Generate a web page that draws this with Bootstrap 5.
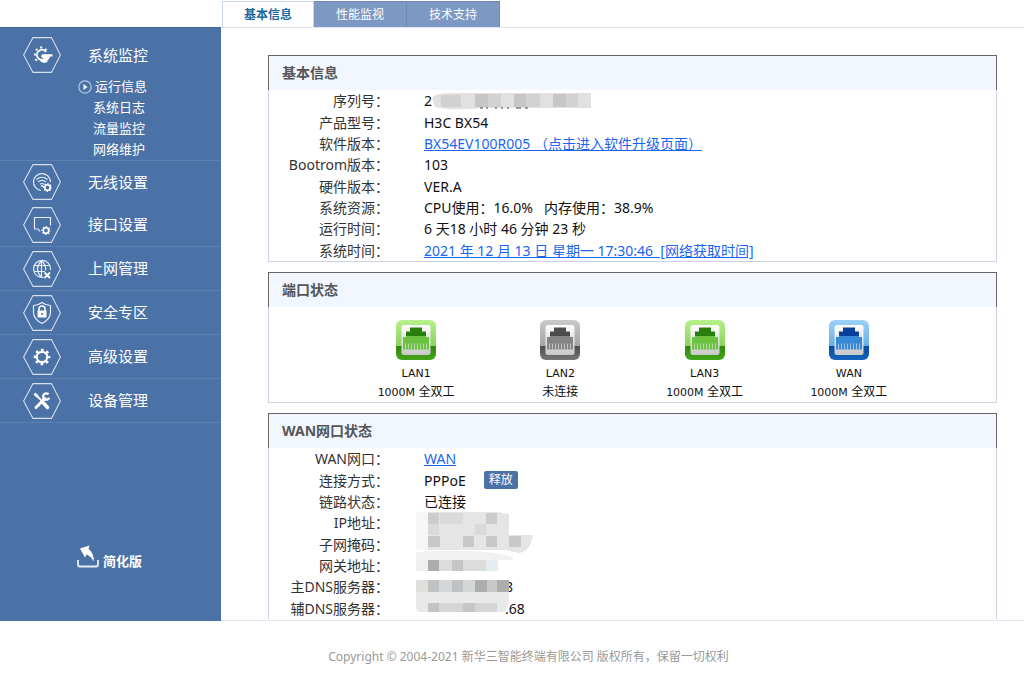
<!DOCTYPE html>
<html lang="zh-CN">
<head>
<meta charset="utf-8">
<meta name="viewport" content="width=device-width, initial-scale=1">
<title>基本信息</title>
<link href="https://cdn.jsdelivr.net/npm/bootstrap@5.3.0/dist/css/bootstrap.min.css" rel="stylesheet">
<style>
  body { font-family: "Noto Sans", "Noto Sans CJK SC", sans-serif; font-size: 14px; line-height: 21px; color: #111; background: #fff; }
  .top-tabs { margin-left: 222px; padding-top: 1px; height: 27px; }
  .top-tabs .nav-link { width: 93px; height: 26px; padding: 0; font-size: 12px; line-height: 25px; text-align: center; color: #fff; background: #7d99c3; border: 1px solid #7189ae; border-width: 1px 1px 0 0; border-radius: 0; }
  .top-tabs .nav-link.active { width: 92px; color: #1a689c; font-weight: 700; background: #fff; border: 1px solid #cbd7e8; border-bottom: 0; }
  .side { width: 221px; background: #4a72a6; border-top: 1px solid #3d64a0; flex: none; }
  .side a { color: #fff; text-decoration: none; }
  .side-item { display: flex; align-items: center; height: 44px; padding-left: 23px; font-size: 15px; border-bottom: 1px solid #5b80b2; }
  .side-item.short { height: 42px; border-bottom: 0; }
  .side-item svg { margin-right: 27px; }
  .side-group { padding-top: 6px; border-bottom: 1px solid #5b80b2; }
  .sub-item { display: flex; align-items: center; height: 21px; padding-left: 93px; font-size: 13px; }
  .sub-item.current { padding-left: 78px; gap: 3px; }
  .simple-link { padding: 0 0 49px 77px; font-size: 13px; font-weight: 700; gap: 4px; }
  .simple-link svg { margin-bottom: 3px; }
  .hex { fill: none; stroke: #d5e0ee; stroke-width: 1.1; }
  .ln { fill: none; stroke: #e4ecf5; stroke-width: 1.2; }
  .main-area { border-top: 1px solid #dfe4ef; border-bottom: 1px solid #e3e7f1; padding: 27px 27px 0 47px; min-height: 594px; }
  .panel { border: 1px solid #cbd2e3; border-top: 0; margin-bottom: 10px; }
  .panel.open-end { border-bottom: 0; margin-bottom: 0; }
  .panel h2 { margin: 0 -1px; padding: 1px 0 0 13px; height: 35px; font-size: 14px; line-height: 32px; font-weight: 700; color: #555; background: #f2f6fe; border: 1px solid #666; border-bottom: 0; }
  .facts { display: grid; grid-template-columns: 120px 1fr; grid-auto-rows: 1fr; column-gap: 35px; min-height: 171px; margin: 0; align-items: center; }
  .facts dt { font-weight: 400; text-align: right; color: #333; white-space: nowrap; }
  .facts dd { margin: 0; display: flex; align-items: center; white-space: pre; height: 21px; }
  .facts a { color: #1a66f0; }
  .release { padding: 0 4px; height: 18px; line-height: 16px; font-size: 12px; color: #fff; background: #4a72a6; border-radius: 2px; margin-left: 18px; }
  .ports { padding: 12px 75px 0; display: grid; grid-template-columns: repeat(4, 1fr); font-family: "DejaVu Sans", "Noto Sans CJK SC", sans-serif; font-size: 11px; line-height: 19px; text-align: center; }
  .ports svg { display: block; margin: 0 auto 3px; }
  .ports span { font-size: 12px; }
  .masked { position: relative; }
  .masked svg { position: absolute; left: -8px; top: 0; }
  .tail { padding-left: 81px; }
  footer { padding-top: 25px; padding-left: 33px; font-size: 12px; color: #999; text-align: center; }
</style>
</head>
<body>
<svg width="0" height="0" class="position-absolute" aria-hidden="true">
  <defs>
    <path id="hexagon" class="hex" d="M.6 18 10 .6h18.500L37.400 18 28.500 35.400H10z"/>
    <g id="gear" fill="none" stroke="#fff"><circle r="5.200" stroke-width="2.200"/><circle r="7.100" stroke-width="2.400" stroke-dasharray="2.600 2.976" stroke-dashoffset="1.300"/></g>
    <g id="cog" fill="none" stroke="#fff"><circle r="2.700" stroke-width="1.600"/><circle r="3.900" stroke-width="1.200" stroke-dasharray="1.500 1.563" stroke-dashoffset=".7"/></g>
    <linearGradient id="green" x2="0" y2="1"><stop offset="0" stop-color="#b6f08c"/><stop offset=".64" stop-color="#8bd45e"/><stop offset=".66" stop-color="#2f8a0b"/><stop offset="1" stop-color="#43a519"/></linearGradient>
    <linearGradient id="grey" x2="0" y2="1"><stop offset="0" stop-color="#c9c9c9"/><stop offset=".64" stop-color="#a5a5a5"/><stop offset=".66" stop-color="#505050"/><stop offset="1" stop-color="#777"/></linearGradient>
    <linearGradient id="blue" x2="0" y2="1"><stop offset="0" stop-color="#9cd2fa"/><stop offset=".64" stop-color="#66aee9"/><stop offset=".66" stop-color="#064c9e"/><stop offset="1" stop-color="#1465bb"/></linearGradient>
    <linearGradient id="plate" x2="0" y2="1"><stop offset="0" stop-color="#fff"/><stop offset="1" stop-color="#c8c8c8"/></linearGradient>
    <g id="socket">
      <rect x="5.500" y="6" width="29" height="30" rx="2.500" fill="url(#plate)"/>
      <path d="M14 8.500h12v4h4v5H10v-5h4z" fill="var(--deep)"/>
      <path d="M10 17h20v1h3v12.500H7V18h3z" fill="var(--tone)"/>
      <path d="M9.500 24.500v6m3-6v6m3-6v6m3-6v6m3-6v6m3-6v6m3-6v6m3-6v6" stroke="#ddd" stroke-width=".9" opacity=".75"/>
    </g>
  </defs>
</svg>

<nav class="top-tabs nav">
  <a class="nav-link active" href="#">基本信息</a>
  <a class="nav-link" href="#">性能监视</a>
  <a class="nav-link" href="#">技术支持</a>
</nav>

<div class="d-flex">
  <nav class="side d-flex flex-column">
    <div class="side-group">
      <a class="side-item short" href="#"><svg width="38" height="36"><use href="#hexagon"/><g fill="none" stroke="#fff"><path d="M21.500 22.200A5 5 0 1 1 23 15" stroke-width="1.800"/><path d="M12.500 23.500l1.300-1.300M11 17.500h2M13 12l1.300 1.300M18.200 9.500v2M23.500 12l-1.300 1.300" stroke-width="2.200"/></g><path d="M19 17.200h10.500v2.300H27v1.200h-.8V22h-.8v1.300h-1V25l-3.400 1-3.500-1.500v-3l3.500.5-3-2.500z" fill="#fff"/></svg>系统监控</a>
      <a class="sub-item current" href="#"><svg width="14" height="14" class="ln"><circle cx="7" cy="7" r="6.200" stroke="#b8cae1"/><path d="M5.500 4v6L9.500 7z" fill="#fff" stroke="none"/></svg>运行信息</a>
      <a class="sub-item" href="#">系统日志</a>
      <a class="sub-item" href="#">流量监控</a>
      <a class="sub-item" href="#">网络维护</a>
    </div>
    <a class="side-item short" href="#"><svg width="38" height="36"><use href="#hexagon"/><g class="ln"><path d="M18 26.500A8.500 8.500 0 1 1 27.500 18"/><path d="M13.500 15.500q5.500-4.500 11 0M15 18q4-3.200 8 0M17 20.300q2-1.600 4 0"/></g><circle cx="19" cy="22" r="1" fill="#fff"/><use href="#cog" x="24.500" y="23.500"/></svg>无线设置</a>
    <a class="side-item" href="#"><svg width="38" height="36"><use href="#hexagon"/><path class="ln" d="M27.500 18.500v-8h-16v11.500h3.500l2 2.500"/><use href="#cog" x="23" y="23.500"/></svg>接口设置</a>
    <a class="side-item" href="#"><svg width="38" height="36"><use href="#hexagon"/><g class="ln"><path d="M20.500 26.300A8.500 8.500 0 1 1 27.500 19M11.500 14.500h15M11 20.500h11M18.500 9.500v17M18.500 9.500q-8 8.500 0 17M18.500 9.500q5 4.500 4 10"/></g><path d="M21.500 21.500l5.500 5.500m0-5.500L21.500 27" stroke="#fff" stroke-width="1.800"/></svg>上网管理</a>
    <a class="side-item" href="#"><svg width="38" height="36"><use href="#hexagon"/><path class="ln" d="M19 7.500q4 3 8.500 3v7q0 6.500-8.500 11-8.500-4.500-8.500-11v-7q4.500 0 8.500-3z"/><path d="M16 16v-2q0-3 3-3t3 3v2" fill="none" stroke="#fff" stroke-width="1.500"/><path d="M14.500 15.500h9v7h-9z" fill="#fff"/><circle cx="19" cy="19" r="1" fill="#4a72a6"/></svg>安全专区</a>
    <a class="side-item" href="#"><svg width="38" height="36"><use href="#hexagon"/><use href="#gear" x="19" y="18"/></svg>高级设置</a>
    <a class="side-item" href="#"><svg width="38" height="36"><use href="#hexagon"/><g fill="none" stroke="#fff"><path d="M13 24.500l9-9" stroke-width="3" stroke-linecap="round"/><path d="M25.600 11.300a3.200 3.200 0 1 0 .6 3.500" stroke-width="2.300"/><path d="M12 11l8 8" stroke-width="1.800"/><path d="M20.500 20l4 4.500" stroke-width="3.600" stroke-linecap="round"/><path d="M11.500 10.500l3 3" stroke-width="2.600"/></g></svg>设备管理</a>
    <a class="simple-link d-flex align-items-end mt-auto" href="#"><svg width="22" height="24"><path d="M1 15v4.500q0 2 2 2h16q2 0 2-2V15" fill="none" stroke="#e6edf6" stroke-width="1.800"/><path d="M3 3.500L12.500.5l-1 3.300q6 5 5 12.700-2-5-7-7L8 12.500z" fill="#fff"/></svg>简化版</a>
  </nav>

  <main class="main-area flex-grow-1">
    <section class="panel">
      <h2>基本信息</h2>
      <dl class="facts">
        <dt>序列号：</dt><dd>2<svg width="160" height="18"><path d="M0 6q3-5 18-5h141v15H50Q20 19 3 15z" fill="#e1e1e1"/><path d="M9 3h20v12H9z" fill="#d2d0d0"/><path d="M43 2h13v13H43zM82 2h12v13H82zM121 2h13v13h-13z" fill="#c7c5c6"/><path d="M56 2h13v13H56zM94 2h14v13H94zM134 2h12v13h-12z" fill="#d3d2d2"/><path d="M48 16h3m3 0h2m7 0h2m4 0h2m4 0h2m7 0h5m4 0h3" stroke="#444"/></svg></dd>
        <dt>产品型号：</dt><dd>H3C BX54</dd>
        <dt>软件版本：</dt><dd><a href="#">BX54EV100R005 （点击进入软件升级页面）</a></dd>
        <dt>Bootrom版本：</dt><dd>103</dd>
        <dt>硬件版本：</dt><dd>VER.A</dd>
        <dt>系统资源：</dt><dd>CPU使用：16.0%   内存使用：38.9%</dd>
        <dt>运行时间：</dt><dd>6 天18 小时 46 分钟 23 秒</dd>
        <dt>系统时间：</dt><dd><a href="#">2021 年 12 月 13 日 星期一 17:30:46  [网络获取时间]</a></dd>
      </dl>
    </section>

    <section class="panel">
      <h2>端口状态</h2>
      <div class="ports">
        <div><svg width="40" height="42" style="--deep:#28800a;--tone:#6cc241"><rect y="1" width="40" height="40" rx="6" fill="url(#green)"/><use href="#socket"/></svg>LAN1<br>1000M <span>全双工</span></div>
        <div><svg width="40" height="42" style="--deep:#4c4c4c;--tone:#858585"><rect y="1" width="40" height="40" rx="6" fill="url(#grey)"/><use href="#socket"/></svg>LAN2<br><span>未连接</span></div>
        <div><svg width="40" height="42" style="--deep:#28800a;--tone:#6cc241"><rect y="1" width="40" height="40" rx="6" fill="url(#green)"/><use href="#socket"/></svg>LAN3<br>1000M <span>全双工</span></div>
        <div><svg width="40" height="42" style="--deep:#07409a;--tone:#3789d8"><rect y="1" width="40" height="40" rx="6" fill="url(#blue)"/><use href="#socket"/></svg>WAN<br>1000M <span>全双工</span></div>
      </div>
    </section>

    <section class="panel open-end">
      <h2>WAN网口状态</h2>
      <dl class="facts">
        <dt>WAN网口：</dt><dd><a href="#">WAN</a></dd>
        <dt>连接方式：</dt><dd>PPPoE<button type="button" class="btn release">释放</button></dd>
        <dt>链路状态：</dt><dd>已连接</dd>
        <dt>IP地址：</dt><dd class="masked"><svg width="120" height="62"><path d="M0 0h82l11 2v21h24q-3 17-14 18L90 38H0z" fill="#e5e5e5"/><path d="M0 0h12v38H0z" fill="#f6f6f5"/><path d="M12 1h11v11H12zM70 1h11v11H70z" fill="#ccc"/><path d="M24 1h23v11H24zM59 12h11v11H59zM12 12h11v11H12z" fill="#dadada"/><path d="M12 24h12v11H12zM47 24h11v11H47zM93 24h12v11H93zM70 24h11v11H70z" fill="#c6c8ca"/><path d="M0 40q65-4 97 5v3H0z" fill="#f1f1f1"/><path d="M0 48h82v11H0z" fill="#dcdcdc"/><path d="M0 48h12v11H0z" fill="#f0efed"/><path d="M12 48h11v11H12z" fill="#acacac"/><path d="M36 48h11v11H36z" fill="#c4c5c7"/><path d="M70 48h12v11H70z" fill="#e5edf1"/></svg></dd>
        <dt>子网掩码：</dt><dd></dd>
        <dt>网关地址：</dt><dd></dd>
        <dt>主DNS服务器：</dt><dd class="masked"><span class="tail">8</span><svg width="96" height="40"><path d="M0 4h93v22l-4 10H4q-4 0-4-5z" fill="#e9e9e9"/><path d="M0 4h12v12H0z" fill="#e1dfdb"/><path d="M12 4h11v12H12zM36 4h11v12H36z" fill="#bfc1c3"/><path d="M23 4h13v12H23zM47 4h12v12H47z" fill="#d3d7d8"/><path d="M59 4h12v12H59zM81 4h12v12H81z" fill="#aeacad"/><path d="M71 4h10v12H71z" fill="#c8c8c8"/><path d="M12 27h11v9H12z" fill="#c6c3c4"/><path d="M23 27h24v9H23zM59 27h22v9H59z" fill="#d5d5d5"/><path d="M47 27h12v9H47z" fill="#c5c7c7"/></svg></dd>
        <dt>辅DNS服务器：</dt><dd><span class="tail">.68</span></dd>
      </dl>
    </section>
  </main>
</div>

<footer>Copyright © 2004-2021 新华三智能终端有限公司 版权所有，保留一切权利</footer>
<script src="https://cdn.jsdelivr.net/npm/bootstrap@5.3.0/dist/js/bootstrap.bundle.min.js"></script>
</body>
</html>
